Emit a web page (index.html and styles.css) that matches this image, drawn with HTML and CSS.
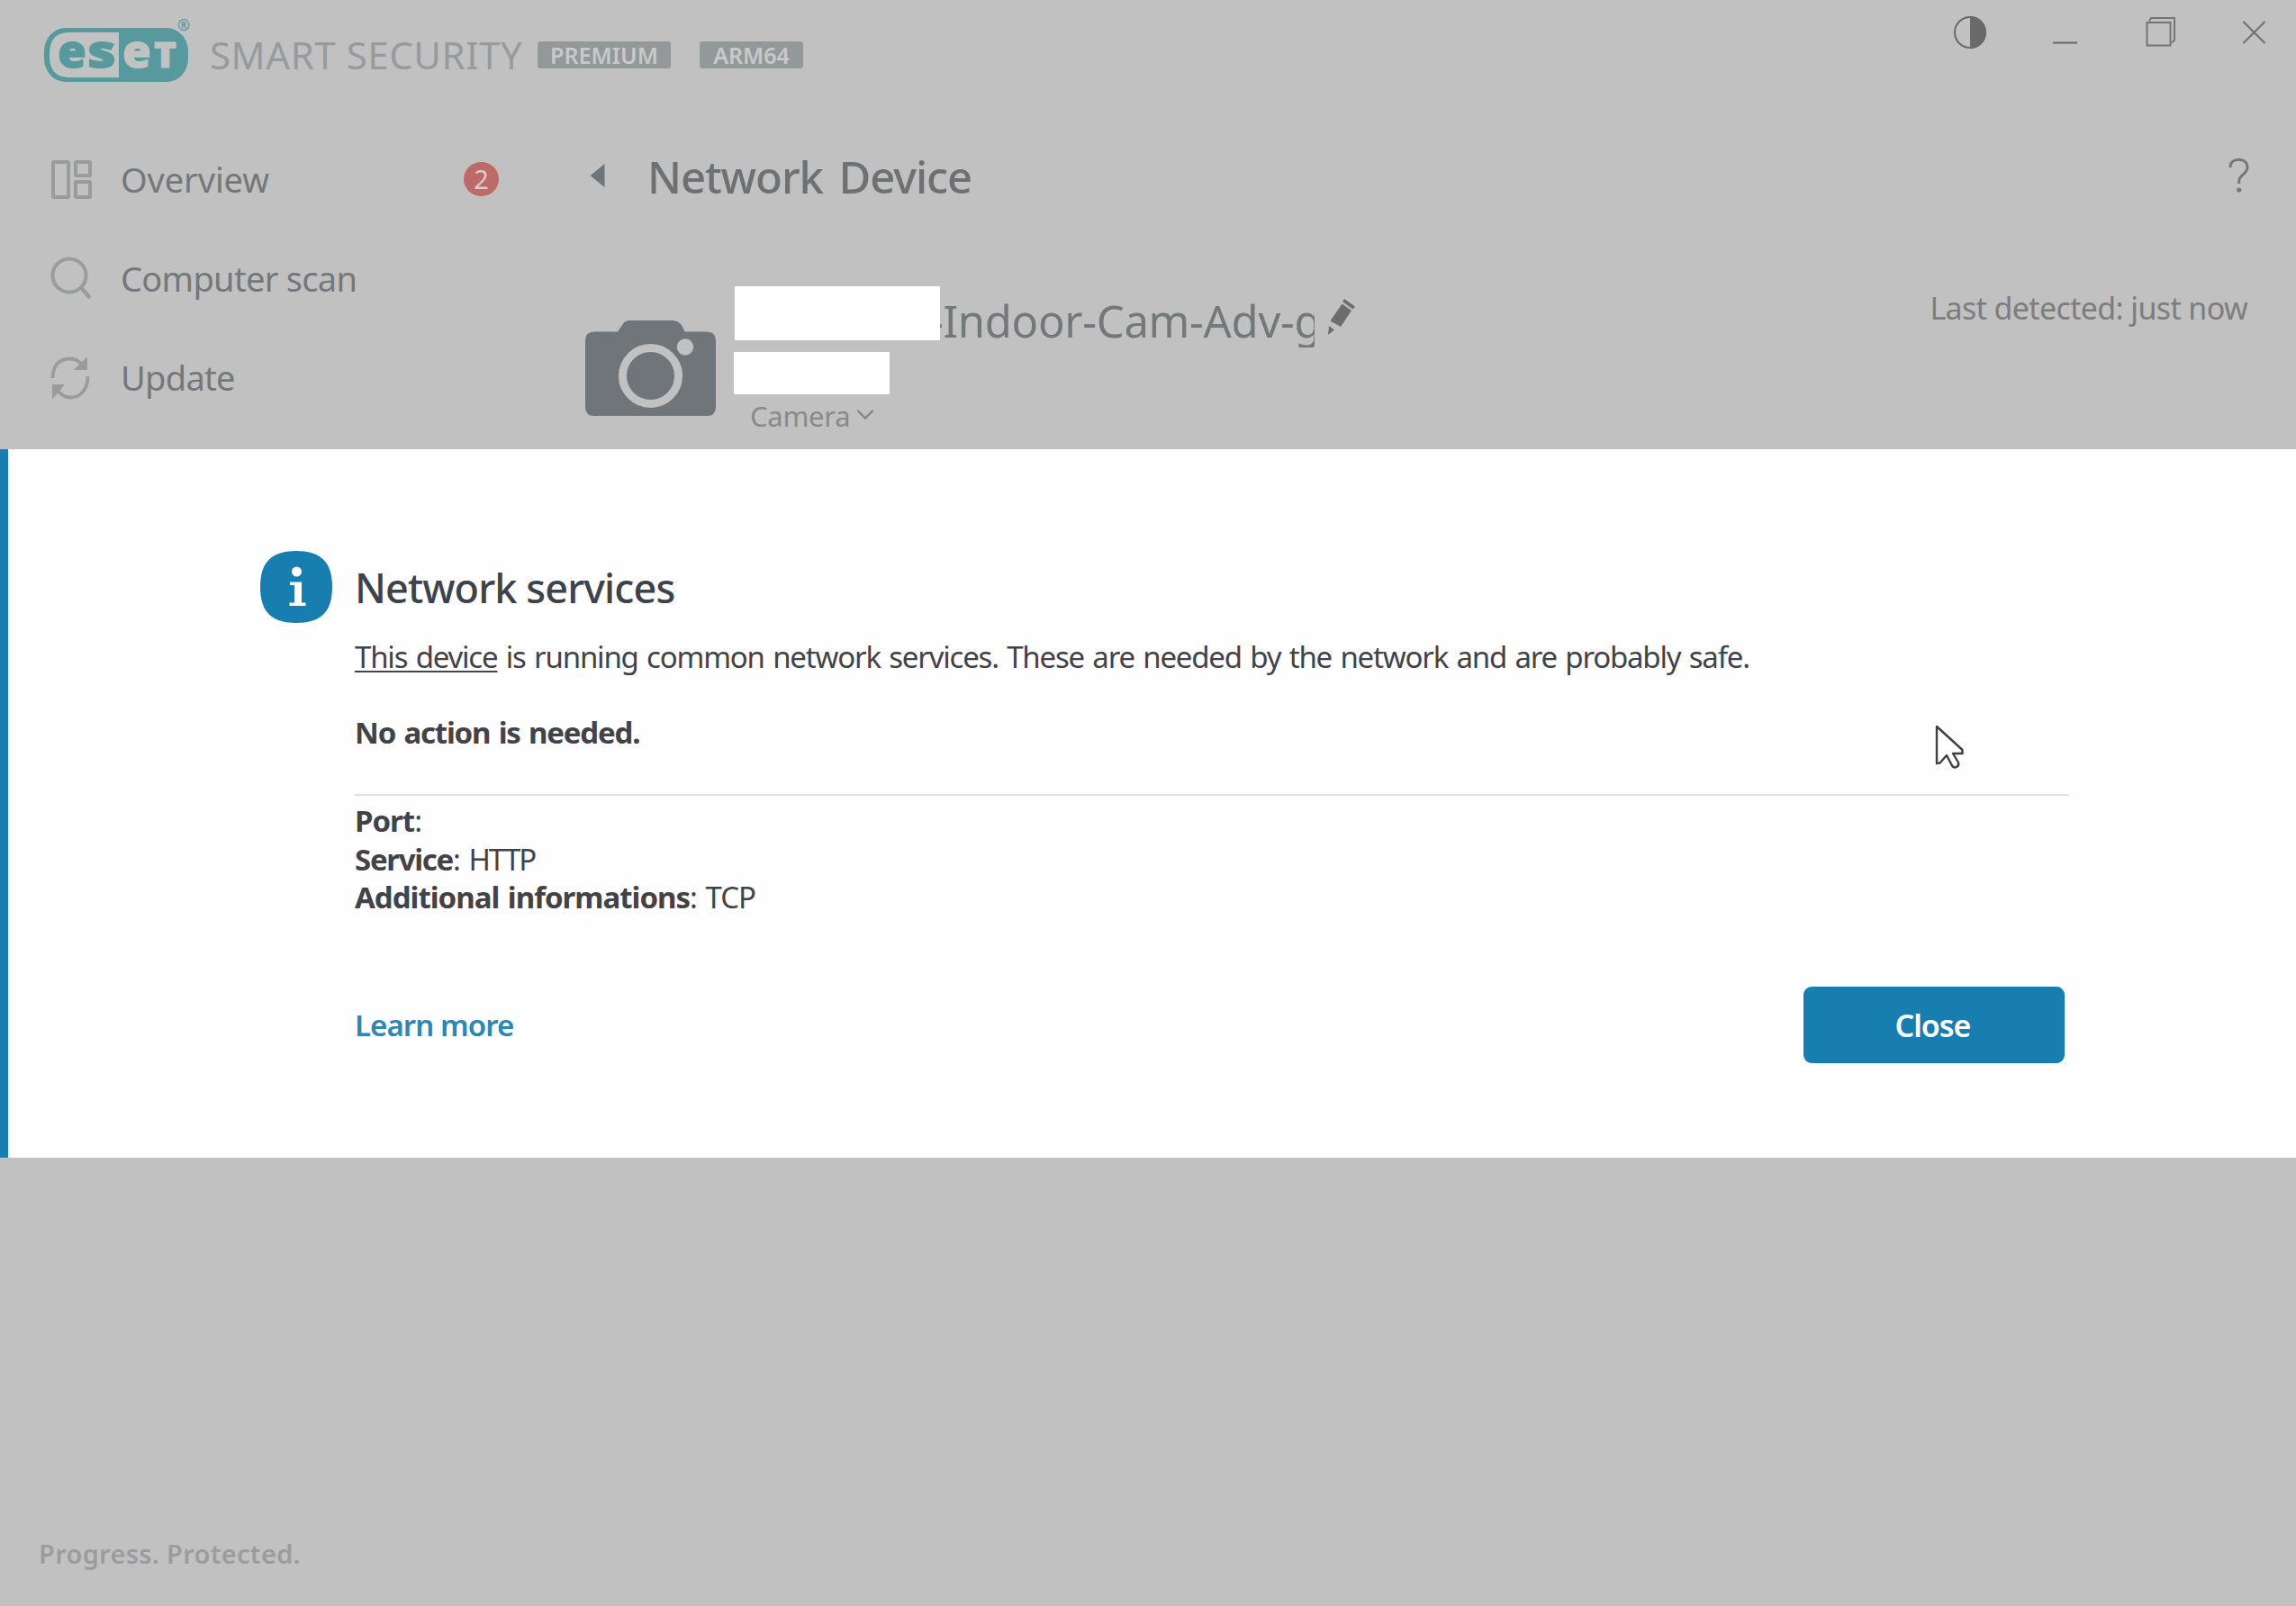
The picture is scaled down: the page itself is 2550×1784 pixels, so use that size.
FILE: index.html
```html
<!DOCTYPE html>
<html lang="en">
<head>
  <meta charset="UTF-8">
  <meta name="viewport" content="width=device-width, initial-scale=1.0">
  <title>ESET Smart Security Premium</title>
  <link rel="stylesheet" href="styles.css">
</head>
<body>
  <div class="window">
    <!-- Title bar -->
    <header class="titlebar">
      <div class="brand">
        <svg class="logo" width="168" height="90" viewBox="0 -4 168 90">
          <rect x="1" y="11" width="160" height="60" rx="24" ry="26" fill="#57999d"/>
          <path d="M84 16H30C12 16 7 26 7 41s5 25 23 25h54z" fill="#c1c3c3"/>
          <g class="logo-text logo-teal">
            <text x="16" y="55" textLength="32" lengthAdjust="spacingAndGlyphs">e</text>
            <text x="49" y="55" textLength="32" lengthAdjust="spacingAndGlyphs">s</text>
          </g>
          <g class="logo-text logo-light">
            <text x="88" y="55" textLength="32" lengthAdjust="spacingAndGlyphs">e</text>
            <text class="logo-t" x="123" y="55" textLength="25" lengthAdjust="spacingAndGlyphs">T</text>
          </g>
          <text class="logo-reg" x="149" y="14" fill="#57999d">®</text>
        </svg>
        <span class="product">SMART SECURITY</span>
        <span class="tag tag-premium">PREMIUM</span>
        <span class="tag tag-arch">ARM64</span>
      </div>
      <div class="controls">
        <svg width="38" height="38" viewBox="0 0 38 38">
          <circle cx="19" cy="19" r="17" fill="none" stroke="#6a6a6a" stroke-width="2"/>
          <path d="M19 1a18 18 0 0 1 0 36z" fill="#6a6a6a"/>
        </svg>
        <svg width="29" height="38" viewBox="0 0 29 38">
          <path d="M0 30.500h27" stroke="#737373" stroke-width="2.400"/>
        </svg>
        <svg width="35" height="38" viewBox="0 0 35 38" fill="none" stroke="#757575" stroke-width="2">
          <rect x="2.500" y="8" width="26" height="25.500"/>
          <path d="M5 6.500L7 3h26v24.500l-3 3"/>
        </svg>
        <svg width="27" height="38" viewBox="0 0 27 38">
          <path d="M1.500 7l24 24M25.500 7l-24 24" stroke="#707070" stroke-width="2"/>
        </svg>
      </div>
    </header>

    <div class="main">
      <!-- Sidebar menu -->
      <nav class="sidebar">
        <div class="nav-item">
          <svg width="46" height="46" viewBox="0 0 46 46" fill="none" stroke="#9a9b9b" stroke-width="4">
            <rect x="3" y="3" width="17" height="39" rx="1"/>
            <rect x="28" y="3" width="16" height="15" rx="1"/>
            <rect x="28" y="25" width="16" height="17" rx="1"/>
          </svg>
          <span class="overview">Overview</span>
          <span class="badge">2</span>
        </div>
        <div class="nav-item">
          <svg width="46" height="50" viewBox="0 0 46 50" fill="none" stroke="#9a9b9b" stroke-width="4">
            <circle cx="21" cy="21" r="18.500"/>
            <path d="M33.500 34L44 46" stroke-width="4.500"/>
          </svg>
          <span>Computer scan</span>
        </div>
        <div class="nav-item">
          <svg width="46" height="50" viewBox="0 0 46 50" fill="none" stroke="#9a9b9b" stroke-width="3.800">
            <path d="M2.500 25C2.500 11 10 3.500 21 3.500c7 0 12 3.500 15 8"/>
            <path d="M41.500 23C41.500 38 33 46.500 22.500 46.500c-7 0-11.500-3.500-15-9"/>
            <path d="M40 3.500V15H28z" fill="#9a9b9b" stroke-width="2"/>
            <path d="M3 46V33h11z" fill="#9a9b9b" stroke-width="2"/>
          </svg>
          <span>Update</span>
        </div>
      </nav>

      <!-- Device page -->
      <section class="content">
        <div class="page-head">
          <svg width="17" height="28" viewBox="0 0 17 28">
            <path d="M16.500 1v26L0.500 14z" fill="#6f7579"/>
          </svg>
          <h1>Network Device</h1>
          <svg class="help" width="24" height="42" viewBox="0 0 24 42">
            <path d="M2 12C2 6 6 3.200 11.500 3.200 17.500 3.200 21 7 21 12c0 7.500-9.300 8-9.300 15v3" fill="none" stroke="#74787b" stroke-width="3"/>
            <circle cx="11.700" cy="37" r="2.600" fill="#74787b"/>
          </svg>
        </div>
        <div class="device">
          <svg class="camera" width="145" height="107" viewBox="0 0 145 107">
            <path d="M10 12.500h26l6-9Q44.500 0 49 0h48q7 0 10.500 6l3 6.500H135q10 0 10 10V96q0 10-10 10H10Q0 106 0 96V22.500q0-10 10-10z" fill="#6f7578"/>
            <circle cx="72.500" cy="61.500" r="31" fill="none" stroke="#c1c1c1" stroke-width="9"/>
            <circle cx="111" cy="29.500" r="9.200" fill="#c1c1c1"/>
          </svg>
          <div class="device-info">
            <div class="device-name">
              <span class="blank blank-name"></span>
              <span class="name">-Indoor-Cam-Adv-g</span>
              <svg class="pencil" width="32" height="42" viewBox="0 0 32 42" fill="#6d6d6d">
                <path d="M15.500 6.500L26 14 14 32 2.500 25.500z"/>
                <path d="M18 1l12 8.500-2.500 3L16 4z"/>
                <path d="M1 31l6 4.500L0 41z"/>
              </svg>
            </div>
            <span class="blank blank-ip"></span>
            <div class="device-type">
              <span>Camera</span>
              <svg width="20" height="14" viewBox="0 0 20 14">
                <path d="M1.500 1L10 9.500 18.500 1" fill="none" stroke="#858585" stroke-width="2.400"/>
              </svg>
            </div>
          </div>
          <span class="detected">Last detected: just now</span>
        </div>
      </section>
    </div>

    <footer class="footer"><span>Progress. Protected.</span></footer>
  </div>

  <!-- Message dialog -->
  <div class="dialog">
    <svg class="info-icon" width="80" height="80" viewBox="0 0 80 80">
      <path d="M40 0C66 0 80 11 80 40S66 80 40 80 0 69 0 40 14 0 40 0z" fill="#187eb0"/>
      <circle cx="40.500" cy="23" r="5.500" fill="#fff"/>
      <path d="M33 34.500h13V57.500h4.500V61H32.500V57.500H38V38h-5z" fill="#fff"/>
    </svg>
    <div class="dialog-body">
      <h2>Network services</h2>
      <p class="message"><a href="#">This device</a> is running common network services. These are needed by the network and are probably safe.</p>
      <p class="action-note">No action is needed.</p>
      <div class="details">
        <div><b>Port</b>:</div>
        <div><b class="service">Service</b>: <span class="protocol">HTTP</span></div>
        <div><b>Additional informations</b>: TCP</div>
      </div>
      <div class="buttons">
        <a class="learn" href="#">Learn more</a>
        <button class="close-btn">Close</button>
      </div>
    </div>
  </div>

  <svg class="cursor" width="34" height="52" viewBox="0 0 34 52">
    <path d="M2 2v41l3.500-.5L13 34l6 11.500q2 3 5 1.500t2-5L20 32h10.500v-4z" fill="#fff" stroke="#3f3f48" stroke-width="2.400" stroke-linejoin="round"/>
  </svg>
</body>
</html>
```
FILE: styles.css
```css
* {
  box-sizing: border-box;
}
body {
  margin: 0;
  background: #c1c1c1;
  font-family: 'Noto Sans', 'Open Sans', sans-serif;
  color: #73787b;
}
h1, h2, p {
  margin: 0;
}
svg {
  display: block;
  flex: none;
}
.window {
  display: flex;
  flex-direction: column;
  width: 2550px;
  height: 1784px;
  overflow: hidden;
}
/* Title bar */
.titlebar {
  display: flex;
  justify-content: space-between;
  align-items: flex-start;
  height: 145px;
}
.brand {
  display: flex;
  align-items: center;
  height: 122px;
  padding-left: 48px;
}
.logo-text {
  font-size: 51px;
  font-weight: 900;
}
.logo-teal {
  fill: #57999d;
  stroke: #57999d;
}
.logo-light {
  fill: #c1c3c3;
  stroke: #c1c3c3;
}
.logo-t {
  font-size: 39px;
}
.logo-reg {
  font-size: 17px;
  font-weight: bold;
}
.product {
  width: 364px;
  margin: -1px 0 0 17px;
  font-size: 42px;
  line-height: 60px;
  letter-spacing: 0.55px;
  white-space: nowrap;
  color: #969b9e;
}
.tag {
  height: 30px;
  border-radius: 3px;
  background: #93989b;
  color: #c8caca;
  font-size: 25px;
  font-weight: 600;
  line-height: 30px;
  text-align: center;
}
.tag-premium {
  width: 148px;
}
.tag-arch {
  width: 115px;
  margin-left: 32px;
}
.controls {
  display: flex;
  gap: 73px;
  padding: 17px 33px 0 0;
}
.main {
  display: flex;
  flex: 1;
}
/* Sidebar */
.sidebar {
  width: 600px;
}
.nav-item {
  display: flex;
  align-items: center;
  gap: 32px;
  height: 110px;
  padding: 0 46px 0 56px;
  font-size: 38px;
  letter-spacing: -0.7px;
}
.nav-item span {
  margin-bottom: 2px;
}
.nav-item .overview {
  letter-spacing: -0.1px;
}
.badge {
  width: 39px;
  height: 38px;
  margin-left: auto;
  border-radius: 50%;
  background: #bd6a68;
  color: #d6cfcf;
  font-size: 29px;
  line-height: 37px;
  letter-spacing: 0;
  text-align: center;
}
/* Device page */
.content {
  flex: 1;
}
.page-head {
  display: flex;
  align-items: center;
  height: 100px;
  padding: 0 51px 0 55px;
}
h1 {
  margin: 2px 0 0 47px;
  font-size: 49px;
  font-weight: 500;
  letter-spacing: -1.1px;
  word-spacing: 6px;
  color: #6d7173;
}
.help {
  margin-left: auto;
}
.device {
  display: flex;
  align-items: flex-start;
  padding: 73px 54px 0 50px;
}
.camera {
  margin-top: 38px;
}
.device-info {
  margin-left: 20px;
}
.device-name {
  display: flex;
  align-items: flex-start;
  height: 73px;
}
.blank {
  display: block;
  background: #fff;
}
.blank-name {
  width: 228px;
  height: 60px;
  margin-left: 1px;
}
.blank-ip {
  width: 173px;
  height: 47px;
}
.name {
  width: 416px;
  margin-top: 8px;
  overflow: hidden;
  font-size: 49px;
  line-height: 60px;
  letter-spacing: -0.3px;
  text-indent: -12px;
  white-space: nowrap;
}
.pencil {
  margin: 13px 0 0 15px;
}
.device-type {
  display: flex;
  align-items: center;
  gap: 7px;
  margin: 4px 0 0 18px;
  font-size: 31px;
  line-height: 40px;
  letter-spacing: -0.3px;
  color: #8a8a8a;
}
.detected {
  margin: 2px 0 0 auto;
  font-size: 34px;
  line-height: 44px;
  letter-spacing: -0.64px;
  color: #7d7d7d;
}
.footer {
  padding: 0 0 38px 43px;
  font-size: 29px;
  font-weight: 600;
  line-height: 40px;
  letter-spacing: 0.3px;
  color: #999d9f;
}
/* Dialog over the window */
.dialog {
  position: absolute;
  top: 499px;
  left: 0;
  display: flex;
  gap: 25px;
  width: 2550px;
  height: 787px;
  padding: 113px 252px 0 280px;
  border-left: 9px solid #187eb0;
  background: #fefefe;
  color: #434347;
  font-size: 33px;
  line-height: 44px;
  letter-spacing: -0.92px;
}
.dialog-body {
  flex: 1;
  padding-top: 11px;
}
h2 {
  font-size: 45px;
  font-weight: 500;
  line-height: 60px;
  color: #3d434b;
}
.message {
  margin-top: 25px;
  letter-spacing: -1.2px;
  word-spacing: 2px;
  white-space: nowrap;
}
.message a {
  color: inherit;
  text-decoration-thickness: 2px;
  text-underline-offset: 3px;
}
.action-note {
  margin-top: 40px;
  font-weight: bold;
  letter-spacing: -1.2px;
  word-spacing: 2px;
}
.details {
  margin-top: 46px;
  padding-top: 7px;
  border-top: 2px solid #e0e0e0;
  line-height: 42.5px;
  letter-spacing: -1px;
  word-spacing: 2px;
}
.service {
  letter-spacing: -1.3px;
}
.protocol {
  letter-spacing: -2px;
}
.buttons {
  display: flex;
  justify-content: space-between;
  align-items: center;
  margin-top: 77px;
  padding-right: 5px;
}
.learn {
  padding-top: 2px;
  color: #2f86b4;
  font-weight: 600;
  text-decoration: none;
}
.close-btn {
  width: 290px;
  height: 85px;
  padding: 2px 9px 0 6px;
  border: none;
  border-radius: 9px;
  background: #187eb0;
  color: #fff;
  font: 600 34px 'Noto Sans', sans-serif;
  letter-spacing: -1px;
}
.cursor {
  position: absolute;
  top: 805px;
  left: 2149px;
}
```
